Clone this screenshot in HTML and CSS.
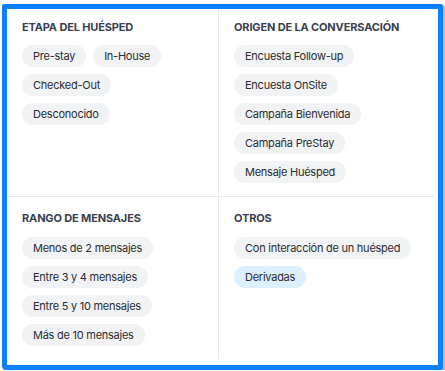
FILE: index.html
```html
<!DOCTYPE html>
<html lang="es">
<head>
  <meta charset="UTF-8" />
  <meta name="viewport" content="width=device-width, initial-scale=1.0"/>
  <title>Filtros</title>
  <link rel="stylesheet" href="styles.css">
</head>
<body>
  <div class="frame">
    <div class="filters">
      <section class="cell top left">
        <h2>Etapa del huésped</h2>
        <div class="chips">
          <span class="chip">Pre-stay</span>
          <span class="chip">In-House</span>
          <span class="chip">Checked-Out</span>
          <span class="chip">Desconocido</span>
        </div>
      </section>

      <section class="cell top">
        <h2>Origen de la conversación</h2>
        <div class="chips">
          <span class="chip">Encuesta Follow-up</span>
          <span class="chip">Encuesta OnSite</span>
          <span class="chip">Campaña Bienvenida</span>
          <span class="chip">Campaña PreStay</span>
          <span class="chip">Mensaje Huésped</span>
        </div>
      </section>

      <section class="cell bottom left">
        <h2>Rango de mensajes</h2>
        <div class="chips">
          <span class="chip">Menos de 2 mensajes</span>
          <span class="chip">Entre 3 y 4 mensajes</span>
          <span class="chip">Entre 5 y 10 mensajes</span>
          <span class="chip">Más de 10 mensajes</span>
        </div>
      </section>

      <section class="cell bottom">
        <h2>Otros</h2>
        <div class="chips">
          <span class="chip">Con interacción de un huésped</span>
          <span class="chip active">Derivadas</span>
        </div>
      </section>
    </div>
  </div>
</body>
</html>
```

FILE: styles.css
```css
body {
  margin: 0;
  font-family: "Inter", "Noto Sans", sans-serif;
  background: #fff;
}
.frame {
  margin: 4px 0 0 2px;
  width: 427px;
  height: 352px;
  padding: 0 4px 4px 0;
  box-sizing: content-box;
  border: 5px solid #0a80ff;
  border-radius: 2px 2px 2px 4px;
  box-shadow: 3px 2px 2px rgba(0, 0, 0, 0.28);
  background: #fff;
}
.filters {
  display: grid;
  grid-template-columns: 212px 1fr;
  height: 349px;
}
.cell {
  padding: 11px 15px 13px;
}
.cell.top {
  border-bottom: 1px solid #e6e7ec;
}
.cell.bottom {
  padding-top: 14px;
}
.cell.left {
  border-right: 1px solid #e6e7ec;
}
h2 {
  margin: 0 0 11px;
  font-size: 11px;
  line-height: 14px;
  font-weight: 700;
  text-transform: uppercase;
  color: #3a4150;
  letter-spacing: -0.15px;
}
.cell.bottom h2 {
  margin-bottom: 12px;
}
.chips {
  display: flex;
  flex-wrap: wrap;
  gap: 7px;
}
.chip {
  display: inline-flex;
  align-items: center;
  height: 22px;
  padding: 0 11px;
  border-radius: 11px;
  background: #f1f2f4;
  color: #2b2d31;
  font-size: 11px;
  letter-spacing: -0.25px;
  white-space: nowrap;
}
.chip.active {
  background: #dcefff;
}
```
